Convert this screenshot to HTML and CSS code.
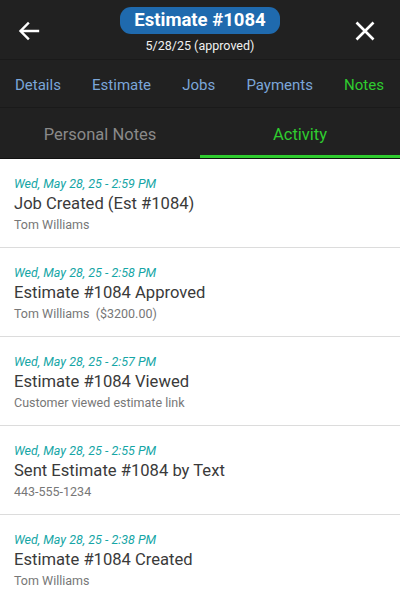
FILE: index.html
```html
<!DOCTYPE html>
<html>
<head>
<meta charset="utf-8">
<link rel="stylesheet" href="styles.css">
</head>
<body>
<div class="app">
  <header class="topbar">
    <button class="icon-btn">
      <svg width="24" height="24" viewBox="0 0 24 24"><path d="M21 12H4M11 4.5L3.5 12l7.5 7.5" fill="none" stroke="#fff" stroke-width="2.4" stroke-linecap="square"/></svg>
    </button>
    <div class="title-wrap">
      <div class="pill">Estimate #1084</div>
      <div class="subtitle">5/28/25 (approved)</div>
    </div>
    <button class="icon-btn">
      <svg width="24" height="24" viewBox="0 0 24 24"><path d="M3.5 3.5L20.5 20.5M20.5 3.5L3.5 20.5" fill="none" stroke="#fff" stroke-width="2.6"/></svg>
    </button>
  </header>
  <nav class="tabs">
    <span class="tab">Details</span>
    <span class="tab">Estimate</span>
    <span class="tab">Jobs</span>
    <span class="tab">Payments</span>
    <span class="tab active">Notes</span>
  </nav>
  <nav class="subtabs">
    <span class="subtab">Personal Notes</span>
    <span class="subtab active">Activity</span>
  </nav>
  <ul class="list">
    <li class="item">
      <div class="date">Wed, May 28, 25 - 2:59 PM</div>
      <div class="title">Job Created (Est #1084)</div>
      <div class="sub">Tom Williams</div>
    </li>
    <li class="item">
      <div class="date">Wed, May 28, 25 - 2:58 PM</div>
      <div class="title">Estimate #1084 Approved</div>
      <div class="sub">Tom Williams&nbsp;&nbsp;($3200.00)</div>
    </li>
    <li class="item">
      <div class="date">Wed, May 28, 25 - 2:57 PM</div>
      <div class="title">Estimate #1084 Viewed</div>
      <div class="sub">Customer viewed estimate link</div>
    </li>
    <li class="item">
      <div class="date">Wed, May 28, 25 - 2:55 PM</div>
      <div class="title">Sent Estimate #1084 by Text</div>
      <div class="sub">443-555-1234</div>
    </li>
    <li class="item">
      <div class="date">Wed, May 28, 25 - 2:38 PM</div>
      <div class="title">Estimate #1084 Created</div>
      <div class="sub">Tom Williams</div>
    </li>
  </ul>
</div>
</body>
</html>
```

FILE: styles.css
```css
* { box-sizing: border-box; }
html, body { margin: 0; padding: 0; background: #fff; }
body { font-family: Roboto, "Noto Sans", sans-serif; width: 400px; height: 597px; overflow: hidden; }
.app { display: flex; flex-direction: column; }
.topbar {
  background: #212121;
  height: 60px;
  display: flex;
  align-items: flex-start;
  justify-content: space-between;
  padding: 0 23px 0 17px;
  border-bottom: 1px solid #1a1a1a;
}
.icon-btn {
  background: none; border: 0; padding: 0;
  width: 24px; height: 24px; margin-top: 19px;
  display: flex; align-items: center; justify-content: center;
}
.title-wrap { display: flex; flex-direction: column; align-items: center; padding-top: 7px; margin-left: 6px; }
.pill {
  background: #1f6aae;
  color: #fff;
  font-weight: 700;
  font-size: 18.5px;
  height: 27px;
  line-height: 27px;
  padding: 0 13px;
  border-radius: 11px;
  width: 160px;
  text-align: center;
}
.subtitle { color: #f0f0f0; font-size: 12.5px; margin-top: 4px; line-height: 15px; }
.tabs {
  background: #212121;
  height: 48px;
  display: flex;
  align-items: center;
  justify-content: space-between;
  padding: 3px 16px 0 15px;
  border-bottom: 1px solid #1a1a1a;
}
.tab { color: #7ba6d9; font-size: 15px; }
.tab.active { color: #2fcc2f; }
.subtabs {
  background: #212121;
  height: 51px;
  display: flex;
  border-bottom: 1px solid #111;
}
.subtab {
  flex: 1;
  text-align: center;
  color: #8a8a8a;
  font-size: 16.5px;
  padding-top: 6px;
  line-height: 41px;
  border-bottom: 3px solid transparent;
}
.subtab.active { color: #2fcc2f; border-bottom-color: #2fcc2f; }
.list { list-style: none; margin: 0; padding: 0; }
.item {
  height: 89px;
  padding: 17px 14px 0;
  border-bottom: 1.5px solid #dcdcdc;
}
.date { color: #16a6a6; font-style: italic; font-size: 12.5px; line-height: 15px; }
.title { color: #3a3a3a; font-size: 16.6px; line-height: 22px; margin-top: 2px; }
.sub { color: #777; font-size: 12.5px; line-height: 15px; margin-top: 2px; }
```
